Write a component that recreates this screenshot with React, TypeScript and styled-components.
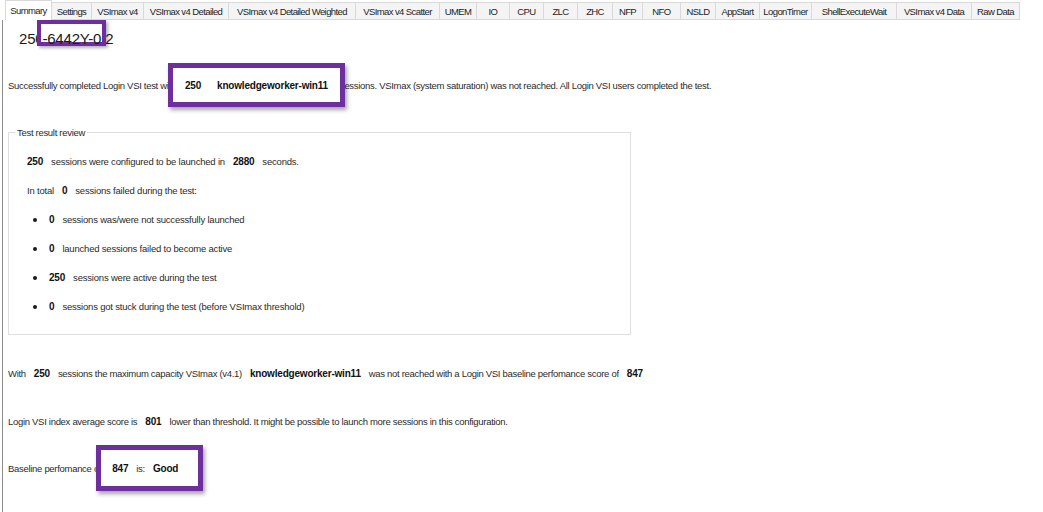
import React from "react";
import styled, { createGlobalStyle } from "styled-components";

const GlobalStyle = createGlobalStyle`
  html, body {
    margin: 0;
    padding: 0;
    background: #ffffff;
  }
  body {
    font-family: "Liberation Sans", Arial, sans-serif;
    color: #2b2b2b;
  }
`;

const Window = styled.div`
  width: 1043px;
  height: 512px;
  overflow: hidden;
  background: #ffffff;
`;

const TabStrip = styled.div`
  display: flex;
  align-items: flex-end;
  height: 20px;
  padding-left: 5px;
`;

const Tab = styled.div<{ $w: number; $active?: boolean }>`
  width: ${(p) => p.$w}px;
  height: ${(p) => (p.$active ? 20 : 18)}px;
  box-sizing: border-box;
  display: flex;
  align-items: center;
  justify-content: center;
  font-size: 9.5px;
  letter-spacing: -0.6px;
  white-space: nowrap;
  color: #1e1e1e;
  background: ${(p) => (p.$active ? "#ffffff" : "#f4f4f4")};
  border: 1px solid #d9d9d9;
  border-bottom: ${(p) => (p.$active ? "none" : "1px solid #d9d9d9")};
  margin-right: -1px;
`;

const Panel = styled.div`
  height: 492px;
  margin-left: 2px;
  border-left: 1px solid #8c8c8c;
  padding-left: 5px;
  box-sizing: border-box;
`;

const Title = styled.div`
  display: flex;
  align-items: flex-start;
  font-size: 15px;
  letter-spacing: -0.2px;
  color: #1a1a1a;
  padding-left: 11px;
  height: 33px;
  line-height: 20px;
  white-space: nowrap;
`;

const TitleText = styled.span`
  padding-top: 9px;
`;

const TitleMark = styled.span`
  position: relative;
  z-index: 1;
  display: block;
  height: 26px;
  box-sizing: border-box;
  padding: 5px 1px 0;
  margin-left: -6px;
  margin-right: -9px;
  background: #ffffff;
  border: 4px solid #6d2f9e;
  box-shadow: 2px 2px 3px rgba(0, 0, 0, 0.3);
`;

const Line = styled.div<{ $top: number }>`
  margin-top: ${(p) => p.$top}px;
  font-size: 9.5px;
  letter-spacing: -0.3px;
  white-space: nowrap;
  display: flex;
  align-items: center;
  height: 14px;
`;

const Value = styled.span<{ $first?: boolean }>`
  font-weight: bold;
  font-size: 10px;
  letter-spacing: -0.2px;
  color: #111111;
  margin: 0 ${(p) => (p.$first ? "8px 0 0" : "8px")};
`;

const Mark = styled.span<{
  $h: number;
  $pad: number;
  $padRight?: number;
  $left: number;
  $right: number;
}>`
  position: relative;
  z-index: 1;
  display: inline-flex;
  align-items: center;
  height: ${(p) => p.$h}px;
  box-sizing: border-box;
  padding: 0 ${(p) => p.$padRight ?? p.$pad}px 0 ${(p) => p.$pad}px;
  margin-left: -${(p) => p.$left}px;
  margin-right: -${(p) => p.$right}px;
  background: #ffffff;
  border: 5px solid #6d2f9e;
  box-shadow: 2px 3px 4px rgba(0, 0, 0, 0.35);
`;

const Group = styled.fieldset`
  margin: 35px 0 0 0;
  width: 623px;
  height: 208px;
  box-sizing: border-box;
  border: 1px solid #dedede;
  padding: 9px 0 0 18px;
`;

const Legend = styled.legend`
  font-size: 9.5px;
  letter-spacing: -0.3px;
  color: #2b2b2b;
  padding: 0 2px;
  margin-left: -12px;
`;

const ReviewLine = styled.div<{ $bullet?: boolean }>`
  display: flex;
  align-items: center;
  height: 29px;
  font-size: 9.5px;
  letter-spacing: -0.2px;
  white-space: nowrap;
  padding-left: ${(p) => (p.$bullet ? 6 : 0)}px;
`;

const Bullet = styled.span`
  width: 4px;
  height: 4px;
  border-radius: 50%;
  background: #1a1a1a;
  margin-right: 4px;
`;

const tabs: [string, number][] = [
  ["Summary", 47],
  ["Settings", 41],
  ["VSImax v4", 53],
  ["VSImax v4 Detailed", 86],
  ["VSImax v4 Detailed Weighted", 128],
  ["VSImax v4 Scatter", 85],
  ["UMEM", 38],
  ["IO", 34],
  ["CPU", 35],
  ["ZLC", 35],
  ["ZHC", 36],
  ["NFP", 31],
  ["NFO", 39],
  ["NSLD", 36],
  ["AppStart", 45],
  ["LogonTimer", 53],
  ["ShellExecuteWait", 86],
  ["VSImax v4 Data", 76],
  ["Raw Data", 49],
];

export default function App() {
  return (
    <Window>
      <GlobalStyle />
      <TabStrip>
        {tabs.map(([name, w], i) => (
          <Tab key={name} $w={w} $active={i === 0}>
            {name}
          </Tab>
        ))}
      </TabStrip>
      <Panel>
        <Title>
          <TitleText>250</TitleText>
          <TitleMark>-6442Y-0</TitleMark>
          <TitleText>02</TitleText>
        </Title>

        <Line $top={25}>
          Successfully completed Login VSI test with
          <Mark $h={44} $pad={4} $left={8} $right={5}>
            <Value>250</Value>
            <Value>knowledgeworker-win11</Value>
          </Mark>
          sessions. VSImax (system saturation) was not reached. All Login VSI
          users completed the test.
        </Line>

        <Group>
          <Legend>Test result review</Legend>
          <ReviewLine>
            <Value $first>250</Value>
            sessions were configured to be launched in
            <Value>2880</Value>
            seconds.
          </ReviewLine>
          <ReviewLine>
            In total
            <Value>0</Value>
            sessions failed during the test:
          </ReviewLine>
          <ReviewLine $bullet>
            <Bullet />
            <Value>0</Value>
            sessions was/were not successfully launched
          </ReviewLine>
          <ReviewLine $bullet>
            <Bullet />
            <Value>0</Value>
            launched sessions failed to become active
          </ReviewLine>
          <ReviewLine $bullet>
            <Bullet />
            <Value>250</Value>
            sessions were active during the test
          </ReviewLine>
          <ReviewLine $bullet>
            <Bullet />
            <Value>0</Value>
            sessions got stuck during the test (before VSImax threshold)
          </ReviewLine>
        </Group>

        <Line $top={31}>
          With
          <Value>250</Value>
          sessions the maximum capacity VSImax (v4.1)
          <Value>knowledgeworker-win11</Value>
          was not reached with a Login VSI baseline perfomance score of
          <Value>847</Value>
        </Line>

        <Line $top={34}>
          Login VSI index average score is
          <Value>801</Value>
          lower than threshold. It might be possible to launch more sessions in
          this configuration.
        </Line>

        <Line $top={33}>
          Baseline perfomance of
          <Mark $h={46} $pad={3} $padRight={12} $left={5} $right={0}>
            <Value>847</Value>
            is:
            <Value>Good</Value>
          </Mark>
        </Line>
      </Panel>
    </Window>
  );
}
